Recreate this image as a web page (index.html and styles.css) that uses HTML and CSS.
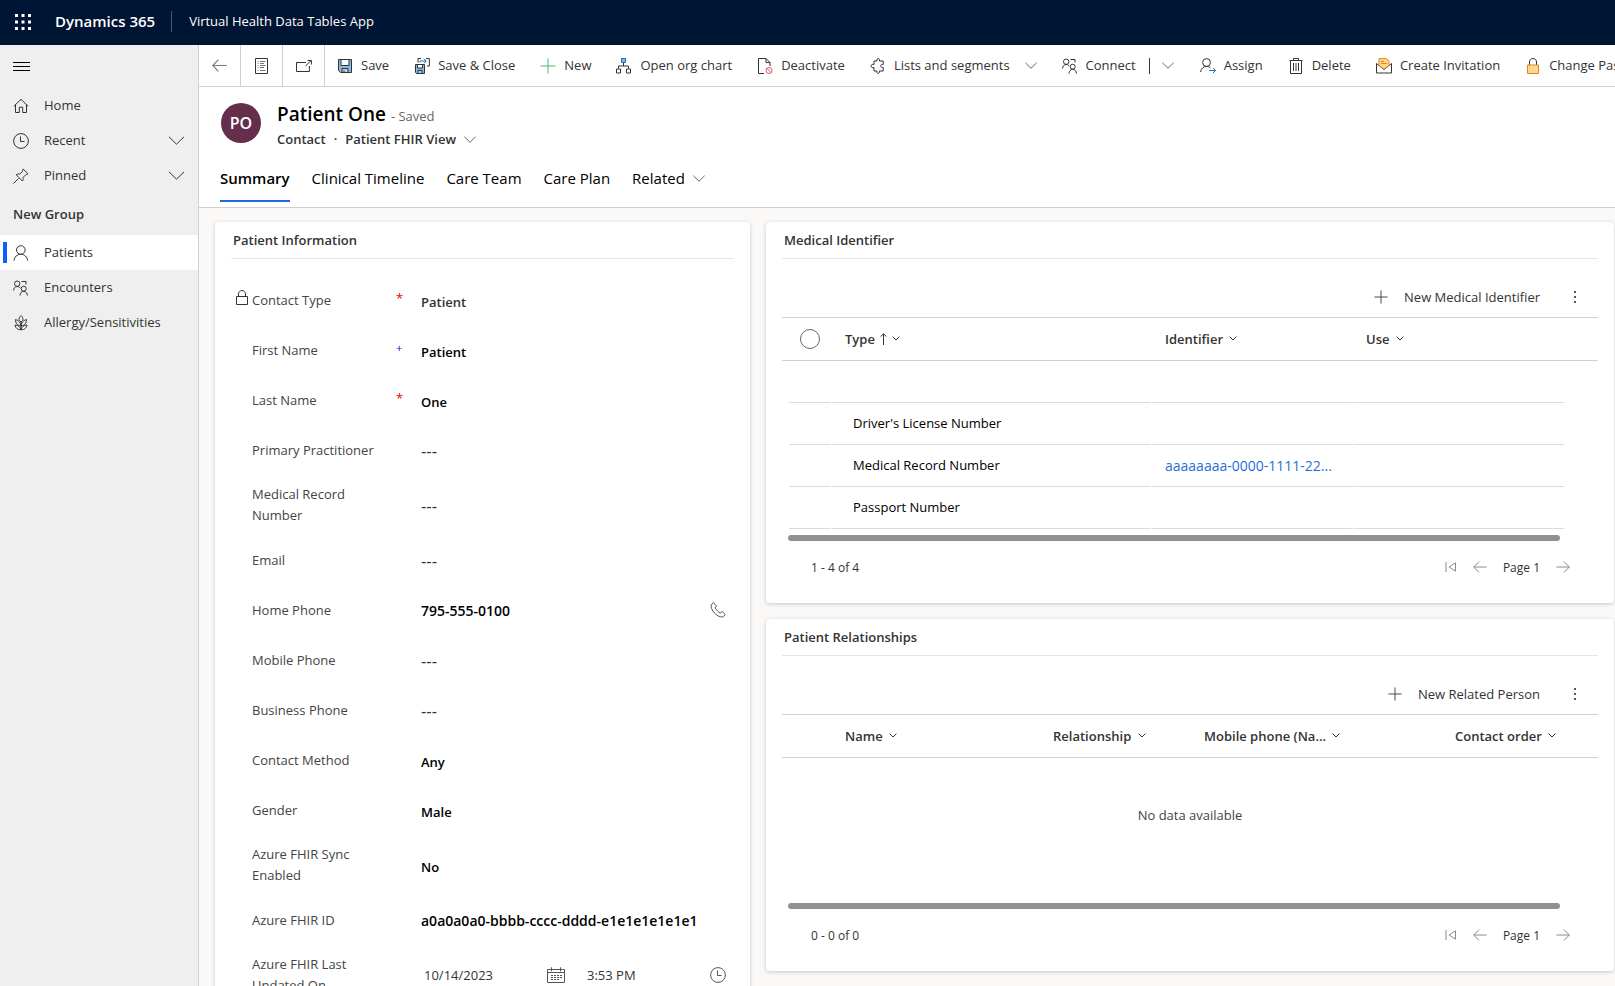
FILE: index.html
```html
<!DOCTYPE html>
<html lang="en">
<head>
    <meta charset="UTF-8">
    <meta name="viewport" content="width=device-width, initial-scale=1.0">
    <title>Patient One - Dynamics 365</title>
    <link rel="stylesheet" href="styles.css">
</head>
<body>

    <!-- shared icons -->
    <svg class="sprite" aria-hidden="true">
        <symbol id="chevron" viewBox="0 0 16 9"><path d="M.5 .8 L8 8.2 L15.5 .8"/></symbol>
        <symbol id="chevron-sm" viewBox="0 0 8 5"><path d="M.6 .6 L4 4 L7.4 .6"/></symbol>
        <symbol id="plus" viewBox="0 0 16 16"><path d="M8 .5v15M.5 8h15"/></symbol>
        <symbol id="clock" viewBox="0 0 16 16"><circle cx="8" cy="8" r="7.4"/><path d="M7.5 3.5v5h4"/></symbol>
        <symbol id="people" viewBox="0 0 16 16"><circle cx="4.2" cy="3.7" r="2.7"/><path d="M.6 10.500c0-2.300 1.500-4 3.600-4 1.400 0 2.400.6 3.100 1.600M8.500 1.500h4.500v3"/><circle cx="10.700" cy="8.700" r="2.500"/><path d="M7 15.500c0-2.400 1.600-4.200 3.700-4.200s3.700 1.800 3.700 4.200"/></symbol>
        <symbol id="back" viewBox="0 0 14 12"><path d="M.7 6h13M6 .6 .7 6 6 11.400"/></symbol>
        <symbol id="forward" viewBox="0 0 14 12"><path d="M.3 6h13M8 .6 13.300 6 8 11.400"/></symbol>
        <symbol id="first" viewBox="0 0 12 12"><path d="M1 1v10M10.500 1.800v8.400L4 6z"/></symbol>
        <symbol id="more" viewBox="0 0 4 12"><path d="M1 0h2v2H1zM1 5h2v2H1zM1 10h2v2H1z"/></symbol>
    </svg>

    <header class="topbar">
        <button class="waffle" aria-label="App launcher">
            <svg width="16" height="16" viewBox="0 0 16 16"><path d="M0 0h3v3H0zM6.500 0h3v3h-3zM13 0h3v3h-3zM0 6.500h3v3H0zM6.500 6.500h3v3h-3zM13 6.500h3v3h-3zM0 13h3v3H0zM6.500 13h3v3h-3zM13 13h3v3h-3z"/></svg>
        </button>
        <span class="brand">Dynamics 365</span>
        <span class="app-name">Virtual Health Data Tables App</span>
    </header>

    <div class="shell">
        <nav class="sidebar">
            <button class="hamburger" aria-label="Toggle menu">
                <svg width="17" height="9" viewBox="0 0 17 9"><path d="M0 .5h17M0 4.500h17M0 8.500h17"/></svg>
            </button>
            <a class="nav-item" href="#">
                <svg class="icon" viewBox="0 0 16 16"><path d="M.8 8.300 8 1.300l7.200 7M2.500 6.700v7.800h3.800V9.200h3.400v5.300h3.800V6.700"/></svg>
                <span>Home</span>
            </a>
            <a class="nav-item" href="#">
                <svg class="icon"><use href="#clock"/></svg>
                <span>Recent</span>
                <svg class="chev-lg"><use href="#chevron"/></svg>
            </a>
            <a class="nav-item" href="#">
                <svg class="icon" viewBox="0 0 16 16"><path d="M.5 15.500l5-5M10.200 1l4.800 4.800-1.400.8-.6-.1-3 3c.4 1.500.2 2.500-.6 3.500L3.200 6.800c1-.8 2.200-1 3.500-.6l3-3-.1-.8z"/></svg>
                <span>Pinned</span>
                <svg class="chev-lg"><use href="#chevron"/></svg>
            </a>
            <h2 class="nav-group">New Group</h2>
            <a class="nav-item selected" href="#">
                <svg class="icon" viewBox="0 0 16 16"><circle cx="7.800" cy="5" r="4.300"/><path d="M1 15.700c.3-3.800 3-6.400 6.800-6.400s6.500 2.600 6.800 6.400"/></svg>
                <span>Patients</span>
            </a>
            <a class="nav-item" href="#">
                <svg class="icon"><use href="#people"/></svg>
                <span>Encounters</span>
            </a>
            <a class="nav-item" href="#">
                <svg class="icon" viewBox="0 0 16 16"><path d="M8 6v9.500M8 .6c-1.300 1.300-2 2.400-2 3.400s.7 2 2 3c1.300-1 2-2 2-3S9.300 1.900 8 .6zM8 11C7.800 8 6 5.500 2.500 4.500 2.300 8 4.500 10.600 8 11c3.500-.4 5.700-3 5.500-6.500C10 5.500 8.200 8 8 11zM8 14.500c-.6-2.500-2.600-4.300-6-4.500.4 3 2.600 5 6 4.500 3.400.5 5.600-1.500 6-4.500-3.400.2-5.400 2-6 4.500z"/></svg>
                <span>Allergy/Sensitivities</span>
            </a>
        </nav>

        <main class="main">
            <div class="commands">
                <button class="cmd-square back" aria-label="Back"><svg width="15" height="13"><use href="#back"/></svg></button>
                <button class="cmd-square" aria-label="Form view">
                    <svg width="13" height="16" viewBox="0 0 13 16"><path d="M.5.5h12v15H.5z"/><path class="soft" d="M2.500 3.500h1M5 3.500h5.500M2.500 5.500h1M5 5.500h4M2.500 7.500h1M5 7.500h5.500M2.500 9.500h1M5 9.500h4M2.500 12.500h1M5 12.500h5.500"/></svg>
                </button>
                <button class="cmd-square" aria-label="Open in new window">
                    <svg width="16" height="12" viewBox="0 0 16 12"><path d="M10 2.500H.5v9h12.900V6M9.500 6 15 .7M11.500 .5h3.900v4"/></svg>
                </button>
                <button class="cmd">
                    <svg class="icon" viewBox="0 0 16 16"><path fill="#83b9e6" d="M1.500 1.500h13v13h-11l-2-2z"/><path fill="#fff" d="M4 1.500h8v6H4z"/><path fill="#ccc" d="M5 10.500h6v4H5z"/><path d="M7 12.500v2"/></svg>
                    <span>Save</span>
                </button>
                <button class="cmd">
                    <svg class="icon" viewBox="0 0 16 16"><path fill="#83b9e6" d="M1.500 6.500h9v9h-8l-1-1z"/><path fill="#fff" d="M3.500 6.500h5v3.500h-5z"/><path fill="#ccc" d="M4 12.500h4v3H4z"/><path d="M4 4.500v-4h3M12 .6h3.400V8H13"/><path class="blue" d="M6 4.500V3h6M10 .8 12.200 3 10 5.200"/></svg>
                    <span>Save &amp; Close</span>
                </button>
                <button class="cmd">
                    <svg class="icon green"><use href="#plus"/></svg>
                    <span>New</span>
                </button>
                <button class="cmd">
                    <svg class="icon" viewBox="0 0 16 16"><path class="blue" fill="#83b9e6" d="M5.500.5h4v4h-4z"/><path d="M7.500 5v3M2.500 10.500V8h10v2.500M.5 11h4v4h-4zM10.500 11h4v4h-4z"/></svg>
                    <span>Open org chart</span>
                </button>
                <button class="cmd">
                    <svg class="icon" viewBox="0 0 16 16"><path d="M7 15.500H1.500V.5H9l4 4V8M9 .6v4h4"/><g class="red"><circle cx="12" cy="12.500" r="3"/><path d="M9.900 10.400l4.200 4.200"/></g></svg>
                    <span>Deactivate</span>
                </button>
                <button class="cmd">
                    <svg class="icon" viewBox="0 0 16 16"><path d="M4 3h3c-.4-1.700.2-2.400 1.200-2.400S9.800 1.500 9.500 3h3.700v3.500c-1.500-.5-2.500.2-2.500 1.400s1 1.900 2.500 1.400V13H9.500c.3 1.600-.3 2.400-1.300 2.400S6.600 14.600 7 13H4V9.500C2.300 10 1 9.300 1 8s1.300-2 3-1.500z"/></svg>
                    <span>Lists and segments</span>
                    <svg class="chev"><use href="#chevron"/></svg>
                </button>
                <button class="cmd">
                    <svg class="icon"><use href="#people"/></svg>
                    <span>Connect</span>
                </button>
                <button class="cmd-split" aria-label="More connect options"><svg class="chev"><use href="#chevron"/></svg></button>
                <button class="cmd">
                    <svg class="icon" viewBox="0 0 16 16"><circle cx="6.500" cy="4.500" r="3.900"/><path d="M.6 14c.4-3.300 2.500-5.500 5.900-5.500 1.800 0 3 .5 4 1.500"/><path class="blue" d="M9 12.500h6.500M13 10l2.500 2.500L13 15"/></svg>
                    <span>Assign</span>
                </button>
                <button class="cmd">
                    <svg class="icon" viewBox="0 0 16 16"><path d="M1.500 2.500h13M5.500 2.500v-2h5v2M2.500 2.500v13h11V2.500M5.500 5v8M8 5v8M10.500 5v8"/></svg>
                    <span>Delete</span>
                </button>
                <button class="cmd">
                    <svg class="icon" viewBox="0 0 16 16"><path d="M.5 5.500 8 11.500l7.500-6v9.500H.5z"/><path class="orange" fill="#fbd98b" d="M3 .6h7.500L13 3v4.300L8 11 3 7.300z"/><path class="orange" d="M5 3.500h3M5 5.500h6"/></svg>
                    <span>Create Invitation</span>
                </button>
                <button class="cmd">
                    <svg class="icon" viewBox="0 0 16 16"><path d="M4.500 7V4c0-2.200 1.300-3.400 3.500-3.400s3.500 1.200 3.500 3.400v3"/><path class="orange" fill="#fbd98b" d="M2.500 7h11v8.500h-11z"/></svg>
                    <span>Change Password</span>
                </button>
            </div>

            <div class="record-head">
                <div class="record-title">
                    <div class="avatar">PO</div>
                    <div>
                        <h1>Patient One <small>- Saved</small></h1>
                        <p class="record-view"><span>Contact</span><span>·</span><button class="view-switch">Patient FHIR View <svg class="chev"><use href="#chevron"/></svg></button></p>
                    </div>
                </div>
                <div class="tabs">
                    <button class="tab active">Summary</button>
                    <button class="tab">Clinical Timeline</button>
                    <button class="tab">Care Team</button>
                    <button class="tab">Care Plan</button>
                    <button class="tab">Related <svg class="chev"><use href="#chevron"/></svg></button>
                </div>
            </div>

            <div class="content">
                <section class="card info">
                    <h2 class="card-title">Patient Information</h2>
                    <form class="fields">
                        <div class="field">
                            <svg class="lock" viewBox="0 0 12 16"><path d="M.5 6.500h11v8H.5zM2.500 6.500V4c0-2.200 1.400-3.400 3.500-3.400S9.500 1.800 9.500 4v2.500"/></svg>
                            <label for="ctype">Contact Type</label><i class="req">*</i>
                            <input id="ctype" class="locked" value="Patient" readonly>
                        </div>
                        <div class="field"><label for="fname">First Name</label><i class="rec">+</i><input id="fname" value="Patient"></div>
                        <div class="field"><label for="lname">Last Name</label><i class="req">*</i><input id="lname" value="One"></div>
                        <div class="field"><label for="pract">Primary Practitioner</label><input id="pract" class="empty" value="---"></div>
                        <div class="field"><label for="mrn">Medical Record Number</label><input id="mrn" class="empty" value="---"></div>
                        <div class="field"><label for="email">Email</label><input id="email" class="empty" value="---"></div>
                        <div class="field">
                            <label for="hphone">Home Phone</label><input id="hphone" class="long" value="795-555-0100">
                            <button type="button" class="field-btn" aria-label="Call"><svg class="icon" viewBox="0 0 16 16"><path d="M3.500.8 1.300 2.500C.5 5 2 8.500 4.700 11.300c2.800 2.700 6 4.300 8.600 3.400l1.900-2.200-3-2.900-2 1.300c-1.800-.8-4-3-5-5l1.300-2z"/></svg></button>
                        </div>
                        <div class="field"><label for="mphone">Mobile Phone</label><input id="mphone" class="empty" value="---"></div>
                        <div class="field"><label for="bphone">Business Phone</label><input id="bphone" class="empty" value="---"></div>
                        <div class="field"><label for="method">Contact Method</label><input id="method" value="Any"></div>
                        <div class="field"><label for="gender">Gender</label><input id="gender" value="Male"></div>
                        <div class="field"><label for="sync">Azure FHIR Sync Enabled</label><input id="sync" value="No"></div>
                        <div class="field"><label for="fhirid">Azure FHIR ID</label><input id="fhirid" class="long" value="a0a0a0a0-bbbb-cccc-dddd-e1e1e1e1e1e1"></div>
                        <div class="field datetime">
                            <label for="udate">Azure FHIR Last Updated On</label>
                            <input id="udate" value="10/14/2023">
                            <button type="button" class="field-btn" aria-label="Pick a date"><svg width="18" height="16" viewBox="0 0 18 16"><path d="M.5 2.500h17v13H.5zM.5 5.500h17M4.500.3v4M13.500.3v4"/><path stroke-dasharray="2 1" d="M4 8.500h11M4 10.500h11M4 12.500h8"/></svg></button>
                            <input id="utime" aria-label="Azure FHIR Last Updated On time" value="3:53 PM">
                            <button type="button" class="field-btn" aria-label="Pick a time"><svg class="icon"><use href="#clock"/></svg></button>
                        </div>
                    </form>
                </section>

                <div class="column">
                    <section class="card">
                        <h2 class="card-title">Medical Identifier</h2>
                        <div class="card-tools">
                            <button class="add"><svg class="add-icon"><use href="#plus"/></svg>New Medical Identifier</button>
                            <button class="more" aria-label="More commands"><svg width="4" height="12"><use href="#more"/></svg></button>
                        </div>
                        <table>
                            <colgroup><col class="w-edge"><col class="w-check"><col><col class="w-ident"><col class="w-use"><col class="w-end"></colgroup>
                            <thead>
                                <tr>
                                    <th></th>
                                    <th class="check-cell"><input type="checkbox" class="check" aria-label="Select all"></th>
                                    <th>Type <svg class="sort" viewBox="0 0 7 12"><path d="M3.500 12V.8M.6 3.600 3.500.8l2.900 2.800"/></svg><svg class="chev-sm"><use href="#chevron-sm"/></svg></th>
                                    <th>Identifier <svg class="chev-sm"><use href="#chevron-sm"/></svg></th>
                                    <th>Use <svg class="chev-sm"><use href="#chevron-sm"/></svg></th>
                                    <th></th>
                                </tr>
                            </thead>
                            <tbody>
                                <tr><td></td><td></td><td></td><td></td><td></td><td></td></tr>
                                <tr><td></td><td></td><td class="type">Driver's License Number</td><td></td><td></td><td></td></tr>
                                <tr><td></td><td></td><td class="type">Medical Record Number</td><td><a href="#">aaaaaaaa-0000-1111-22...</a></td><td></td><td></td></tr>
                                <tr><td></td><td></td><td class="type">Passport Number</td><td></td><td></td><td></td></tr>
                            </tbody>
                        </table>
                        <div class="scrollbar"></div>
                        <div class="pager">
                            <span class="count">1 - 4 of 4</span>
                            <button aria-label="First page"><svg width="12" height="12"><use href="#first"/></svg></button>
                            <button aria-label="Previous page"><svg width="14" height="12"><use href="#back"/></svg></button>
                            <span>Page 1</span>
                            <button aria-label="Next page"><svg width="14" height="12"><use href="#forward"/></svg></button>
                        </div>
                    </section>

                    <section class="card">
                        <h2 class="card-title">Patient Relationships</h2>
                        <div class="card-tools">
                            <button class="add"><svg class="add-icon"><use href="#plus"/></svg>New Related Person</button>
                            <button class="more" aria-label="More commands"><svg width="4" height="12"><use href="#more"/></svg></button>
                        </div>
                        <table>
                            <colgroup><col class="w-lead"><col><col class="w-rel"><col class="w-mobile"><col class="w-order"></colgroup>
                            <thead>
                                <tr>
                                    <th></th>
                                    <th>Name <svg class="chev-sm"><use href="#chevron-sm"/></svg></th>
                                    <th>Relationship <svg class="chev-sm"><use href="#chevron-sm"/></svg></th>
                                    <th>Mobile phone (Na... <svg class="chev-sm"><use href="#chevron-sm"/></svg></th>
                                    <th>Contact order <svg class="chev-sm"><use href="#chevron-sm"/></svg></th>
                                </tr>
                            </thead>
                            <tbody>
                                <tr><td colspan="5" class="no-data">No data available</td></tr>
                            </tbody>
                        </table>
                        <div class="scrollbar"></div>
                        <div class="pager">
                            <span class="count">0 - 0 of 0</span>
                            <button aria-label="First page"><svg width="12" height="12"><use href="#first"/></svg></button>
                            <button aria-label="Previous page"><svg width="14" height="12"><use href="#back"/></svg></button>
                            <span>Page 1</span>
                            <button aria-label="Next page"><svg width="14" height="12"><use href="#forward"/></svg></button>
                        </div>
                    </section>
                </div>
            </div>
        </main>
    </div>

</body>
</html>
```

FILE: styles.css
```css
* { box-sizing: border-box; }
body {
    margin: 0;
    height: 100vh;
    display: flex;
    flex-direction: column;
    overflow: hidden;
    font-family: "Open Sans", "Noto Sans", sans-serif;
    font-size: 13px;
    line-height: 21px;
    color: #333;
    background: #faf9f8;
}
h1, h2, p { margin: 0; }
a { color: inherit; text-decoration: none; }
button, input {
    font: inherit;
    color: inherit;
    background: none;
    border: none;
    padding: 0;
}
button { cursor: pointer; display: flex; align-items: center; }
svg { display: block; flex: none; fill: none; stroke: #333; }
.sprite { position: absolute; width: 0; height: 0; }

/* Icons */
.icon { width: 16px; height: 16px; }
.chev { width: 12px; height: 7px; }
.chev-lg { width: 17px; height: 9px; }
.chev-sm { width: 8px; height: 5px; margin: 0 0 4px 3px; }
.blue { stroke: #1b6fc0; }
.red { stroke: #e3545e; }
.orange { stroke: #e8802a; }
.green { stroke: #4db877; }
.soft { stroke: #777; }

/* Top bar */
.topbar {
    flex: none;
    height: 45px;
    display: flex;
    align-items: center;
    padding: 0 0 2px 15px;
    background: #001433;
    color: #fff;
}
.waffle svg { fill: #fff; stroke: none; }
.brand {
    margin-left: 24px;
    padding-right: 16px;
    font-size: 15px;
    font-weight: 600;
    border-right: 1px solid #4a5872;
}
.app-name { margin-left: 17px; }

.shell { flex: 1; display: flex; min-height: 0; }

/* Sidebar */
.sidebar {
    flex: none;
    width: 199px;
    background: #efefef;
    border-right: 1px solid #d2d0ce;
}
.hamburger { height: 43px; padding-left: 13px; }
.hamburger svg { stroke: #000; }
.nav-item {
    display: flex;
    align-items: center;
    gap: 15px;
    height: 35px;
    padding: 0 13px;
}
.nav-item span { flex: 1; }
.nav-group {
    padding-left: 13px;
    font-size: 13px;
    font-weight: 600;
    line-height: 42px;
}
.nav-item.selected {
    background: linear-gradient(#0b5fff, #0b5fff) 3px 7px / 4px 21px no-repeat #fff;
}

/* Command bar */
.main { flex: 1; min-width: 0; display: flex; flex-direction: column; }
.commands {
    flex: none;
    display: flex;
    height: 42px;
    overflow: hidden;
    background: #fff;
    border-bottom: 1px solid #d2d0ce;
}
.cmd-square {
    flex: none;
    width: 42px;
    justify-content: center;
    border-right: 1px solid #d2d0ce;
}
.back svg { stroke: #777; }
.cmd { flex: none; gap: 8px; padding: 0 13px 0 12px; white-space: nowrap; }
.cmd .chev { margin-left: 7px; }
.cmd-split { flex: none; padding: 0 14px 0 0; }
.cmd-split::before { content: ""; height: 16px; margin-right: 12px; border-left: 1px solid #333; }

/* Record header */
.record-head {
    flex: none;
    height: 121px;
    padding: 15px 21px 0;
    background: #fff;
    border-bottom: 1px solid #d2d0ce;
}
.record-title { display: flex; gap: 16px; height: 62px; }
.avatar {
    width: 40px;
    height: 40px;
    margin: 1px 0 0 1px;
    border-radius: 50%;
    background: #652e4d;
    color: #fff;
    font-size: 16px;
    font-weight: 600;
    line-height: 40px;
    text-align: center;
}
h1 { font-size: 19px; font-weight: 600; line-height: 25px; color: #000; }
h1 small { font-size: 13px; font-weight: 400; color: #666; }
.record-view { display: flex; gap: 8px; font-weight: 600; }
.view-switch { gap: 8px; }
.tabs { display: flex; gap: 22px; font-size: 15px; color: #000; }
.tab { height: 38px; padding-bottom: 8px; gap: 8px; border-bottom: 2px solid transparent; }
.tab.active { font-weight: 600; border-color: #2266e3; }

/* Cards */
.content {
    flex: 1;
    min-height: 0;
    display: grid;
    grid-template-columns: minmax(0, 535fr) minmax(0, 848fr);
    align-items: start;
    gap: 16px;
    padding: 14px 1px 0 16px;
}
.column { display: flex; flex-direction: column; gap: 16px; }
.card {
    padding: 0 16px;
    background: #fff;
    border-radius: 4px;
    box-shadow: 0 1px 4px rgba(0, 0, 0, 0.2);
}
.card-title {
    padding-left: 2px;
    font-size: 13px;
    font-weight: 600;
    line-height: 36px;
    border-bottom: 1px solid #e5e5e5;
}

/* Patient fields */
.fields { padding: 16px 8px 16px 21px; }
.field { position: relative; display: flex; align-items: center; min-height: 50px; }
.field label { flex: none; width: 136px; padding: 9px 0; color: #444; }
.field i { width: 33px; margin-right: -33px; padding: 0 0 4px 8px; font-style: normal; line-height: 14px; }
.req { color: #e00; }
.rec { color: #00e; font-size: 11px; }
.field input {
    flex: 1;
    min-width: 0;
    margin: 4px 0 0 33px;
    color: #000;
    font-weight: 600;
}
.field input.locked { color: #333; }
.field input.long { margin-top: 0; font-size: 14px; }
.field input.empty { color: #333; font: 16px "Liberation Sans", sans-serif; }
.datetime input, .datetime input#utime { margin-top: 0; font-weight: 400; color: #333; }
.datetime input#udate { margin-left: 36px; }
.datetime input#utime { margin-left: 22px; }
.field-btn svg { stroke: #555; }
.lock { position: absolute; left: -16px; top: 15px; width: 12px; height: 16px; }

/* Grids */
.card-tools {
    display: flex;
    justify-content: flex-end;
    align-items: center;
    height: 58px;
    padding: 18px 21px 0 0;
}
.add { gap: 16px; }
.add-icon { width: 14px; height: 14px; }
.more { margin-left: 33px; }
.more svg { fill: #555; stroke: none; }
table { width: 100%; table-layout: fixed; border-spacing: 0; }
th {
    height: 44px;
    padding: 0 0 0 13px;
    font-weight: 600;
    text-align: left;
    white-space: nowrap;
    border: solid #d2d0ce;
    border-width: 1px 0;
}
th svg { display: inline-block; vertical-align: middle; }
.sort { width: 7px; height: 12px; margin: 0 2px 2px 2px; }
td {
    height: 42px;
    padding: 0 0 0 13px;
    color: #000;
    white-space: nowrap;
    border-bottom: 1px solid #dcdcdc;
    border-right: 2px solid #fff;
}
td:first-child, td:last-child { padding: 0; border: none; }
td.type { padding-left: 21px; }
td a { color: #1f6fd6; font-size: 14px; }
th.check-cell { padding-left: 11px; }
.check {
    display: block;
    width: 20px;
    height: 20px;
    margin: 0;
    appearance: none;
    border: 1px solid #666;
    border-radius: 50%;
}
td.no-data { height: 139px; padding-bottom: 24px; color: #444; text-align: center; }
.w-edge { width: 7px; }
.w-check { width: 43px; }
.w-ident { width: 201px; }
.w-use { width: 212px; }
.w-end { width: 33px; }
.w-lead { width: 50px; }
.w-rel { width: 151px; }
.w-mobile { width: 251px; }
.w-order { width: 156px; }
.scrollbar { height: 6px; margin: 6px 38px 0 6px; border-radius: 3px; background: #919191; }
.pager {
    display: flex;
    align-items: center;
    gap: 16px;
    height: 62px;
    padding: 0 28px 10px 29px;
    font-size: 12px;
}
.count { flex: 1; }
.pager svg { stroke: #8a8a8a; }
```
